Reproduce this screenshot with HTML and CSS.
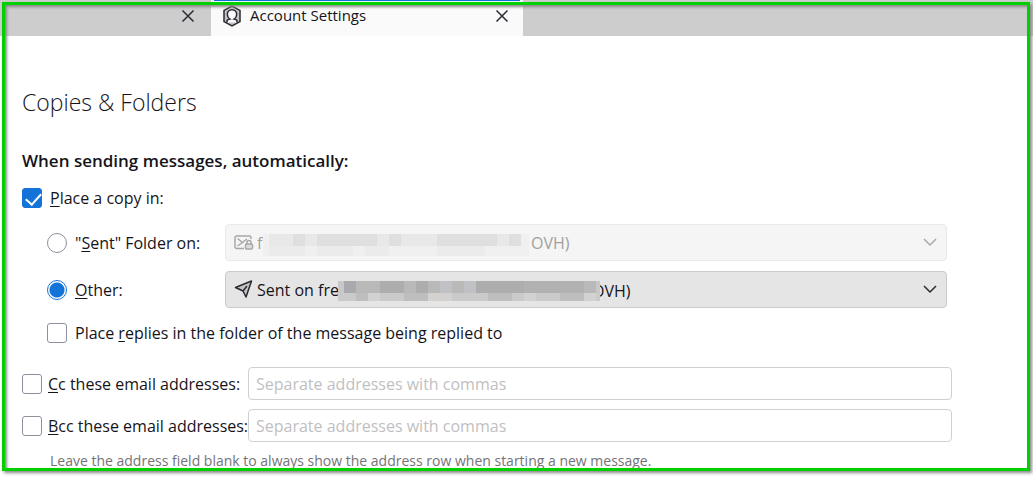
FILE: index.html
```html
<!DOCTYPE html>
<html lang="en">
<head>
    <meta charset="UTF-8">
    <meta name="viewport" content="width=device-width, initial-scale=1.0">
    <title>Account Settings</title>
    <link rel="stylesheet" href="styles.css">
</head>
<body>
    <header class="tabs">
        <div class="tab">
            <button class="close" type="button" aria-label="Close tab">
                <svg width="14" height="14" viewBox="0 0 14 14"><path d="M1.5 1.5l11 11M12.5 1.5l-11 11"/></svg>
            </button>
        </div>
        <div class="tab active">
            <svg class="tab-icon" width="20" height="22" viewBox="0 0 20 22">
                <path class="hex" d="M10 1.2l8 4.2v11.2l-8 4.2-8-4.2V5.400z"/>
                <path class="person" d="M5 17.500v-1.300c0-1.200 1-1.900 2.900-2.200C6.200 12.800 5.300 11.200 5.300 9.400 5.300 6.600 7.300 4.700 10 4.700s4.700 1.900 4.700 4.700c0 1.800-.9 3.400-2.600 4.600 1.900.3 2.900 1 2.900 2.200v1.300"/>
            </svg>
            <span class="tab-title">Account Settings</span>
            <button class="close" type="button" aria-label="Close tab">
                <svg width="14" height="14" viewBox="0 0 14 14"><path d="M1.5 1.5l11 11M12.5 1.5l-11 11"/></svg>
            </button>
        </div>
    </header>

    <main class="content">
        <h1>Copies &amp; Folders</h1>
        <h2>When sending messages, automatically:</h2>

        <label class="choice"><input type="checkbox" checked><span><u>P</u>lace a copy in:</span></label>

        <div class="folders">
            <label class="choice"><input type="radio" name="folder"><span>"<u>S</u>ent" Folder on:</span></label>
            <div class="picker disabled">
                <select aria-label="Sent folder account" disabled><option>f</option></select>
                <svg class="icon" width="20" height="18" viewBox="0 0 20 18">
                    <path d="M10 15.500H2.500a1.500 1.500 0 0 1-1.500-1.500V4.500A1.500 1.500 0 0 1 2.500 3h13A1.500 1.500 0 0 1 17 4.500V6M3.500 5.500l5 4-5 3.500M9 9l4-3"/>
                    <rect class="lock" x="11.500" y="11" width="7" height="5" rx="1"/>
                    <path d="M13 11V9.500a2 2 0 0 1 4 0V11"/>
                </svg>
                <svg class="arrow" width="14" height="9" viewBox="0 0 14 9"><path d="M1 1l6 6 6-6"/></svg>
                <div class="masked account">
                    <svg class="mosaic" width="266" height="22" viewBox="0 0 266 22" shape-rendering="crispEdges">
                        <path fill="#f0f0f0" d="M0 0h266v22H0z"/>
                        <path fill="#e8e8e8" d="M6 0h240v12H6z"/>
                        <path fill="#dfdfdf" d="M30 0h12v12H30zM54 0h60v12H54zM126 0h12v12h-12zM174 0h60v12h-60zM246 0h12v12h-12z"/>
                        <path fill="#ebebeb" d="M6 12h36v10H6zM54 12h36v10H54zM102 12h24v10h-24zM174 12h48v10h-48z"/>
                    </svg>
                    <span>OVH)</span>
                </div>
            </div>

            <label class="choice"><input type="radio" name="folder" checked><span><u>O</u>ther:</span></label>
            <div class="picker">
                <select aria-label="Other folder"><option>Sent on fre</option></select>
                <svg class="icon" width="20" height="18" viewBox="0 0 20 18">
                    <path class="plane" d="M1.500 7.500L17.500 1l-5.500 16-3-6z"/>
                    <path d="M9 11l4-5"/>
                </svg>
                <svg class="arrow" width="14" height="9" viewBox="0 0 14 9"><path d="M1 1l6 6 6-6"/></svg>
                <div class="masked other">
                    <svg class="mosaic" width="262" height="20" viewBox="0 0 262 20" shape-rendering="crispEdges">
                        <path fill="#b9b9ba" d="M0 0h262v12H0z"/>
                        <path fill="#cacaca" d="M0 12h262v8H0z"/>
                        <path fill="#c8c8c9" d="M0 0h6v12H0zM258 0h4v12h-4z"/>
                        <path fill="#a9a9ae" d="M6 0h12v12H6z"/>
                        <path fill="#adadae" d="M42 0h24v12H42zM78 0h12v12H78zM138 0h48v12h-48z"/>
                        <path fill="#bfc1c4" d="M102 0h12v12h-12zM126 0h12v12h-12z"/>
                        <path fill="#b1b1b2" d="M186 0h60v12h-60z"/>
                        <path fill="#bebebf" d="M18 12h12v8H18zM66 12h24v8H66zM150 12h24v8h-24zM222 12h24v8h-24z"/>
                        <path fill="#d3d2d1" d="M30 12h12v8H30zM90 12h24v8H90zM186 12h12v8h-12zM246 12h12v8h-12z"/>
                    </svg>
                    <span>OVH)</span>
                </div>
            </div>
        </div>

        <label class="choice nested"><input type="checkbox"><span>Place <u>r</u>eplies in the folder of the message being replied to</span></label>

        <div class="address">
            <label class="choice"><input type="checkbox"><span><u>C</u>c these email addresses:</span></label>
            <input type="text" aria-label="Cc addresses" placeholder="Separate addresses with commas">
        </div>
        <div class="address">
            <label class="choice"><input type="checkbox"><span><u>B</u>cc these email addresses:</span></label>
            <input type="text" aria-label="Bcc addresses" placeholder="Separate addresses with commas">
        </div>
        <p class="hint">Leave the address field blank to always show the address row when starting a new message.</p>
    </main>
    <div class="frame"></div>
</body>
</html>
```
FILE: styles.css
```css
* {
    box-sizing: border-box;
}
body {
    margin: 0;
    background: #fff;
    color: #15141a;
    font-family: "Open Sans", "Noto Sans", sans-serif;
    font-size: 16px;
    line-height: 20px;
}
.tabs {
    display: flex;
    height: 36px;
    background: #cdcdce;
}
.tab {
    display: flex;
    align-items: center;
    width: 211px;
    padding: 0 16px 4px 11px;
    font-size: 15px;
}
.tab.active {
    width: 312px;
    padding-right: 14px;
    background: linear-gradient(#0a6fe0, #0a6fe0) 3px 0 / 306px 1px no-repeat #fafafa;
}
.tab-icon {
    margin-right: 8px;
}
.tab-title {
    padding-bottom: 2px;
}
.close {
    display: flex;
    margin-left: auto;
    padding: 0;
    border: none;
    background: none;
}
svg {
    fill: none;
    stroke: #2b2a33;
    stroke-width: 1.5;
}
.hex {
    fill: #c4c4c6;
}
.person {
    fill: #fafafa;
}
.content {
    padding: 51px 81px 0 22px;
}
h1 {
    margin: 0;
    font-size: 23px;
    font-weight: 300;
    line-height: 30px;
}
h2 {
    margin: 33px 0 16px;
    font-size: 17px;
    font-weight: 600;
    line-height: 22px;
}
.choice {
    display: flex;
    align-items: center;
    gap: 8px;
    white-space: nowrap;
}
u {
    text-decoration-thickness: 1px;
    text-underline-offset: 2px;
}
input[type="checkbox"],
input[type="radio"] {
    appearance: none;
    flex: none;
    width: 20px;
    height: 20px;
    margin: 0;
    border: 1px solid #8f8f9d;
    border-radius: 3px;
    background: #fff;
}
input[type="radio"] {
    border-radius: 50%;
}
input[type="checkbox"]:checked {
    border-color: #1373d9;
    background: #1373d9;
    position: relative;
}
input[type="checkbox"]:checked::after {
    content: "";
    position: absolute;
    left: 6px;
    top: 1px;
    width: 7px;
    height: 13px;
    border: solid #fff;
    border-width: 0 2px 2px 0;
    transform: rotate(42deg);
}
input[type="radio"]:checked {
    border-color: #1373d9;
    background: radial-gradient(circle, #1373d9 7px, #fff 8px);
}
.folders {
    display: grid;
    grid-template-columns: 178px 1fr;
    row-gap: 10px;
    margin: 16px 5px 15px 25px;
}
.picker {
    position: relative;
}
select {
    appearance: none;
    display: block;
    width: 100%;
    height: 37px;
    padding: 0 31px;
    border: 1px solid #cbcbcb;
    border-radius: 4px;
    background: #e5e5e5;
    color: inherit;
    font: inherit;
    opacity: 1;
}
.icon,
.arrow {
    position: absolute;
    pointer-events: none;
}
.icon {
    left: 9px;
    top: 9px;
}
.plane {
    fill: #c4c4c6;
    stroke-linejoin: round;
}
.arrow {
    right: 10px;
    top: 14px;
}
.disabled {
    color: #a0a0a0;
}
.disabled select {
    border-color: #e9e9e9;
    background: #f5f5f5;
}
.disabled .icon,
.disabled .arrow {
    stroke: #a8a8a8;
}
.lock {
    fill: #dcdcdc;
}
/* blurred-out part of the account name */
.masked {
    display: flex;
    align-items: center;
    position: absolute;
    pointer-events: none;
}
.account {
    left: 38px;
    top: 10px;
    gap: 2px;
    align-items: flex-start;
    line-height: 18px;
}
.other {
    left: 113px;
    top: 10px;
    line-height: 18px;
}
.mosaic {
    position: relative;
    z-index: 1;
    stroke: none;
}
.other .mosaic {
    margin-right: -8px;
}
.nested {
    margin-left: 25px;
}
.address {
    display: grid;
    grid-template-columns: 226px 1fr;
    margin-top: 9px;
}
.address .choice {
    gap: 6px;
}
.nested + .address {
    margin-top: 24px;
}
input[type="text"] {
    height: 33px;
    padding: 0 7px;
    border: 1px solid #d0d0d3;
    border-radius: 4px;
    font: inherit;
}
input::placeholder {
    color: #bfbfc2;
}
.hint {
    margin: 9px 0 0 28px;
    color: #737378;
    font-size: 14px;
}
.frame {
    position: fixed;
    inset: 2px 3px 6px 2px;
    border: 3px solid #00d000;
    box-shadow: 2px 2px 3px #888, inset 2px 2px 3px #888;
    pointer-events: none;
}
```
